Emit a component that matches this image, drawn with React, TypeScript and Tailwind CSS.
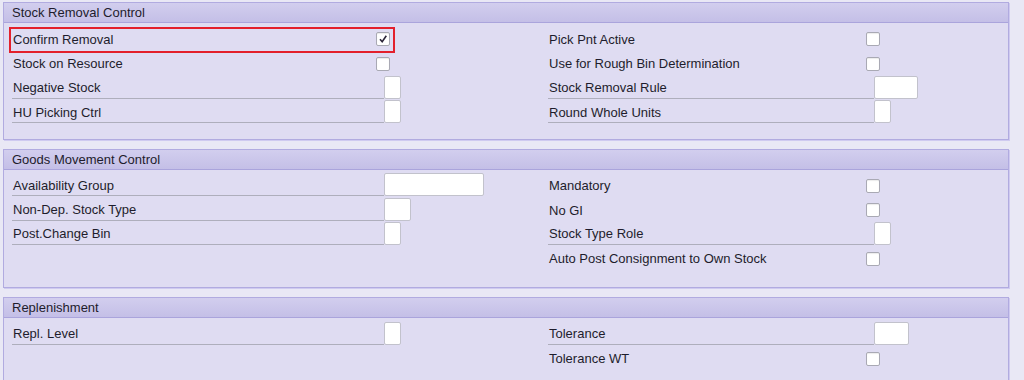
import * as React from "react";

type Field =
  | { label: string; kind: "check"; checked?: boolean; marked?: boolean }
  | { label: string; kind: "input"; w: number };

interface SectionProps {
  title: string;
  left: Field[];
  right: Field[];
  rowH: string;
  pb: string;
}

const Check: React.FC<{ checked?: boolean }> = ({ checked }) => (
  <span className="w-[14px] h-[14px] rounded-[2px] border border-[#a9a9b4] bg-white flex items-center justify-center shadow-[inset_0_1px_1px_rgba(0,0,0,0.08)]">
    {checked && (
      <svg width="10" height="10" viewBox="0 0 10 10">
        <path d="M2 5.2 L4.2 7.8 L8.3 1.8" fill="none" stroke="#2a2438" strokeWidth="1.6" />
      </svg>
    )}
  </span>
);

const Row: React.FC<{ f: Field; labelW: number; rowH: string }> = ({ f, labelW, rowH }) => {
  if (f.kind === "check") {
    return (
      <div className={`relative flex items-center ${rowH}`}>
        <span className="shrink-0 pl-[1px]" style={{ width: labelW - 8 }}>
          {f.label}
        </span>
        <Check checked={f.checked} />
        {f.marked && (
          <span className="absolute left-[-3px] top-0 w-[386px] h-[26px] border-2 border-[#e3202c]" />
        )}
      </div>
    );
  }
  return (
    <div className={`flex items-end pb-[2px] ${rowH}`}>
      <span
        className="shrink-0 pl-[1px] border-b border-[#aeaebc]"
        style={{ width: labelW }}
      >
        {f.label}
      </span>
      <span
        className="h-[23px] rounded-[2px] border border-[#c2c2cc] bg-white"
        style={{ width: f.w }}
      />
    </div>
  );
};

const Section: React.FC<SectionProps> = ({ title, left, right, rowH, pb }) => (
  <section className="border border-[#b1abe0] bg-[#dfdcf2] shadow-[1px_1px_0_#cfcaf0]">
    <div className="h-[20px] px-[8px] flex items-center border-b border-[#aaa4dc] bg-gradient-to-b from-[#d2ceee] to-[#c4bfe7]">
      {title}
    </div>
    <div className={`grid grid-cols-[536px_1fr] pl-[8px] pt-[4px] ${pb}`}>
      <div className="flex flex-col">
        {left.map((f) => (
          <Row key={f.label} f={f} labelW={372} rowH={rowH} />
        ))}
      </div>
      <div className="flex flex-col">
        {right.map((f) => (
          <Row key={f.label} f={f} labelW={326} rowH={rowH} />
        ))}
      </div>
    </div>
  </section>
);

export default function App() {
  return (
    <div
      className="w-[1024px] h-[380px] overflow-hidden bg-[#e9e8f5] pl-[3px] pt-[2px] pr-[15px] text-[13px] text-[#1e1c2c] flex flex-col gap-[9px]"
      style={{ fontFamily: '"Liberation Sans", Arial, sans-serif' }}
    >
      <Section
        title="Stock Removal Control"
        rowH="h-[24.5px]"
        pb="pb-[14px]"
        left={[
          { label: "Confirm Removal", kind: "check", checked: true, marked: true },
          { label: "Stock on Resource", kind: "check" },
          { label: "Negative Stock", kind: "input", w: 17 },
          { label: "HU Picking Ctrl", kind: "input", w: 17 },
        ]}
        right={[
          { label: "Pick Pnt Active", kind: "check" },
          { label: "Use for Rough Bin Determination", kind: "check" },
          { label: "Stock Removal Rule", kind: "input", w: 44 },
          { label: "Round Whole Units", kind: "input", w: 17 },
        ]}
      />
      <Section
        title="Goods Movement Control"
        rowH="h-[24.3px]"
        pb="pb-[16px]"
        left={[
          { label: "Availability Group", kind: "input", w: 100 },
          { label: "Non-Dep. Stock Type", kind: "input", w: 27 },
          { label: "Post.Change Bin", kind: "input", w: 17 },
        ]}
        right={[
          { label: "Mandatory", kind: "check" },
          { label: "No GI", kind: "check" },
          { label: "Stock Type Role", kind: "input", w: 17 },
          { label: "Auto Post Consignment to Own Stock", kind: "check" },
        ]}
      />
      <Section
        title="Replenishment"
        rowH="h-[24.5px]"
        pb="pb-[16px]"
        left={[{ label: "Repl. Level", kind: "input", w: 17 }]}
        right={[
          { label: "Tolerance", kind: "input", w: 35 },
          { label: "Tolerance WT", kind: "check" },
        ]}
      />
    </div>
  );
}
